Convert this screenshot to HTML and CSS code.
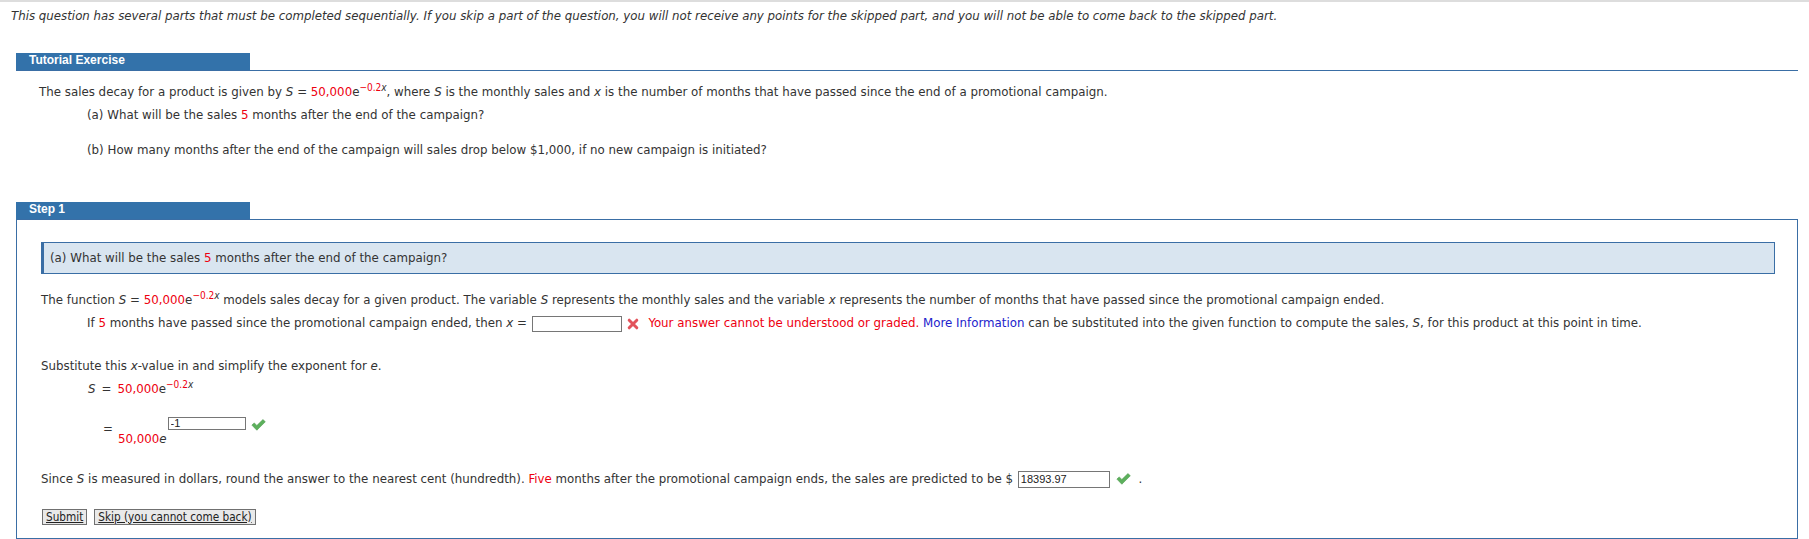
FILE: index.html
```html
<!DOCTYPE html>
<html lang="en">
<head>
  <meta charset="UTF-8" />
  <meta name="viewport" content="width=device-width, initial-scale=1.0"/>
  <title>Tutorial Exercise</title>
  <link rel="stylesheet" href="styles.css">
</head>
<body>
  <div class="page">
    <p class="intro">This question has several parts that must be completed sequentially. If you skip a part of the question, you will not receive any points for the skipped part, and you will not be able to come back to the skipped part.</p>

    <div class="head tutorial-head"><span>Tutorial Exercise</span></div>
    <div class="tutorial">
      <p>The sales decay for a product is given by <i>S</i> = <span class="red">50,000</span>e<sup><span class="red">&minus;0.2</span><i>x</i></sup>, where <i>S</i> is the monthly sales and <i>x</i> is the number of months that have passed since the end of a promotional campaign.</p>
      <p class="indent">(a) What will be the sales <span class="red">5</span> months after the end of the campaign?</p>
      <p class="indent part-b">(b) How many months after the end of the campaign will sales drop below $1,000, if no new campaign is initiated?</p>
    </div>

    <div class="head step-head"><span>Step 1</span></div>
    <div class="step">
      <div class="question">(a) What will be the sales <span class="red">5</span> months after the end of the campaign?</div>

      <p class="fn">The function <i>S</i> = <span class="red">50,000</span>e<sup><span class="red">&minus;0.2</span><i>x</i></sup> models sales decay for a given product. The variable <i>S</i> represents the monthly sales and the variable <i>x</i> represents the number of months that have passed since the promotional campaign ended.</p>
      <p class="given">If <span class="red">5</span> months have passed since the promotional campaign ended, then <i>x</i> = <input class="ans" type="text" value=""><svg class="icon-x" viewBox="0 0 12 12" width="12" height="12"><path d="M2.2 2.2 L9.8 9.8 M9.8 2.2 L2.2 9.8" stroke="#e2535b" stroke-width="3" stroke-linecap="round"/></svg> <span class="red">Your answer cannot be understood or graded.</span> <a class="more" href="#">More Information</a> can be substituted into the given function to compute the sales, <i>S</i>, for this product at this point in time.</p>

      <p class="subst">Substitute this <i>x</i>-value in and simplify the exponent for <i>e</i>.</p>
      <p class="eq"><i>S</i><span class="eq-sign">=</span><span class="red">50,000</span>e<sup><span class="red">&minus;0.2</span><i>x</i></sup></p>
      <div class="eq-row">
        <span class="eq-sign">=</span>
        <span class="base"><span class="red">50,000</span><i>e</i></span>
        <input class="ans small" type="text" value="-1">
        <svg class="icon-check" viewBox="0 0 16 13" width="15" height="12"><path d="M0.8 6.6 L3.4 4.2 L6.2 7.0 L12.8 0.6 L15.4 3.0 L6.2 12.2 Z" fill="#5cb05c" stroke="#4a984a" stroke-width="0.6" stroke-linejoin="round"/></svg>
      </div>

      <p class="since">Since <i>S</i> is measured in dollars, round the answer to the nearest cent (hundredth). <span class="red">Five</span> months after the promotional campaign ends, the sales are predicted to be $ <input class="ans money" type="text" value="18393.97"><svg class="icon-check" viewBox="0 0 16 13" width="15" height="12"><path d="M0.8 6.6 L3.4 4.2 L6.2 7.0 L12.8 0.6 L15.4 3.0 L6.2 12.2 Z" fill="#5cb05c" stroke="#4a984a" stroke-width="0.6" stroke-linejoin="round"/></svg> .</p>

      <div class="buttons">
        <button class="btn" type="button">Submit</button>
        <button class="btn" type="button">Skip (you cannot come back)</button>
      </div>
    </div>
  </div>
</body>
</html>
```

FILE: styles.css
```css
body {
  margin: 0;
  background: #fff;
  color: #333;
  font-family: "DejaVu Sans Condensed", "Liberation Sans", sans-serif;
  font-size: 13.15px;
}
p {
  margin: 0;
  line-height: 16px;
}
i {
  font-style: italic;
}
sup {
  font-size: 10px;
  vertical-align: 5px;
  line-height: 0;
}
.red {
  color: #ee0010;
}
.page {
  border-top: 2px solid #ddd;
}
.intro {
  margin: 7px 0 0 11px;
  font-family: "DejaVu Sans", sans-serif;
  font-style: italic;
  font-size: 11.8px;
  line-height: 14px;
}
.head {
  display: flex;
  margin: 0 11px 0 16px;
}
.head span {
  width: 221px;
  height: 17px;
  padding-left: 13px;
  line-height: 18px;
  background: #3372aa;
  color: #fff;
  font: bold 12px "Liberation Sans", sans-serif;
}
.tutorial-head {
  margin-top: 30px;
}
.tutorial {
  margin: 0 11px 0 16px;
  padding: 13px 0 0 23px;
  border-top: 1px solid #3a6ea5;
}
.tutorial .indent {
  margin: 7px 0 0 48px;
}
.tutorial .part-b {
  margin-top: 19px;
}
.step-head {
  margin-top: 44px;
}
.step {
  margin: 0 11px 0 16px;
  padding: 22px 22px 13px 24px;
  border: 1px solid #3a6ea5;
}
.question {
  padding: 7px 8px 7px 6px;
  line-height: 16px;
  background: #d9e5f0;
  border: 1px solid #3a6ea5;
  border-left-width: 3px;
}
.fn {
  margin-top: 18px;
}
.given {
  margin: 7px 0 0 46px;
}
.subst {
  margin-top: 26px;
}
.eq {
  margin: 7px 0 0 47px;
}
.eq .eq-sign {
  margin: 0 6px;
}
.eq-row {
  display: flex;
  align-items: flex-start;
  margin-top: 20px;
  padding-left: 62px;
}
.eq-row .eq-sign {
  margin: 4px 5px 0 0;
  line-height: 16px;
}
.eq-row .base {
  margin-top: 14px;
  line-height: 16px;
}
.ans {
  box-sizing: border-box;
  width: 90px;
  height: 16px;
  margin: 0 0 0 1px;
  padding: 0 2px;
  border: 1px solid #767676;
  background: #fff;
  color: #222;
  font: 11px "Liberation Sans", sans-serif;
  vertical-align: middle;
}
.ans.small {
  width: 78px;
  height: 13px;
  line-height: 11px;
}
.ans.money {
  width: 92px;
  height: 17px;
}
.icon-x {
  margin: 0 6px 0 5px;
  vertical-align: middle;
}
.icon-check {
  margin: 0 4px 0 6px;
  vertical-align: middle;
}
.eq-row .icon-check {
  margin: 2px 0 0 5px;
}
.more {
  color: #2222cc;
  text-decoration: none;
}
.since {
  margin-top: 24px;
}
.buttons {
  display: flex;
  gap: 7px;
  margin: 21px 0 0 1px;
}
.btn {
  height: 16px;
  padding: 0 3px;
  border: 1px solid #707070;
  background: #e9e9e9;
  color: #222;
  font: 11.7px "DejaVu Sans Condensed", "Liberation Sans", sans-serif;
  line-height: 14px;
  text-decoration: underline;
}
```
